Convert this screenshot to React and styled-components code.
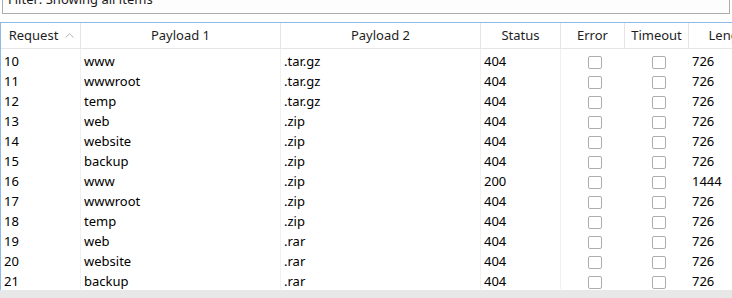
import React from "react";
import styled, { createGlobalStyle } from "styled-components";

const Global = createGlobalStyle`
  html, body { margin: 0; padding: 0; background: #ffffff; overflow: hidden; }
  body { font-family: "Noto Sans", "Segoe UI", sans-serif; font-size: 13px; color: #000; }
`;

const Page = styled.div`
  width: 732px;
  height: 298px;
  overflow: hidden;
  display: flex;
  flex-direction: column;
  background: #fff;
`;

const FilterBox = styled.div`
  box-sizing: border-box;
  margin: -17px 2px 0 2px;
  height: 31px;
  border: 1px solid #adadad;
  background: #fdfdfd;
  padding: 6px 5px 0 5px;
  line-height: 18px;
  color: #1a1a1a;
  white-space: nowrap;
  flex: none;
`;

const Table = styled.div`
  margin-top: 8px;
  border-top: 1px solid #8fb9e6;
  border-left: 1px solid #8fb9e6;
  flex: 1;
  overflow: hidden;
  display: flex;
  flex-direction: column;
`;

const COLS = "80px 200px 200px 80px 64px 64px 82px";

const HeaderRow = styled.div`
  display: grid;
  grid-template-columns: ${COLS};
  height: 26px;
  box-sizing: border-box;
  border-bottom: 1px solid #e5e5e5;
  flex: none;
`;

const HeadCell = styled.div`
  box-sizing: border-box;
  border-right: ${(p) => (p.$last ? "none" : "1px solid #e5e5e5")};
  display: flex;
  align-items: center;
  justify-content: center;
  gap: 7px;
  line-height: 25px;
  color: #1e1e1e;
  white-space: nowrap;
  padding-left: ${(p) => (p.$first ? "2px" : "0")};
`;

const SortArrow = styled.svg`
  width: 9px;
  height: 5px;
  margin-top: -1px;
`;

const Row = styled.div`
  display: grid;
  grid-template-columns: ${COLS};
  height: 20px;
`;

const Cell = styled.div`
  box-sizing: border-box;
  height: 20px;
  padding: 2px 0 0 3px;
  line-height: 20px;
  white-space: nowrap;
  border-right: ${(p) => (p.$divider ? "1px solid #f0f0f0" : "none")};
`;

const CheckCell = styled.div`
  box-sizing: border-box;
  height: 20px;
  display: flex;
  justify-content: center;
  align-items: flex-start;
  padding: 7px 0 0 ${(p) => p.$offset}px;
`;

const Box = styled.div`
  box-sizing: border-box;
  width: 14px;
  height: 13px;
  border: 1px solid #adadad;
  border-radius: 2px;
  background: #fff;
`;

const Scrollbar = styled.div`
  height: 8px;
  background: #e8e8e8;
  flex: none;
`;

const rows = [
  [10, "www", ".tar.gz", 404, 726],
  [11, "wwwroot", ".tar.gz", 404, 726],
  [12, "temp", ".tar.gz", 404, 726],
  [13, "web", ".zip", 404, 726],
  [14, "website", ".zip", 404, 726],
  [15, "backup", ".zip", 404, 726],
  [16, "www", ".zip", 200, 1444],
  [17, "wwwroot", ".zip", 404, 726],
  [18, "temp", ".zip", 404, 726],
  [19, "web", ".rar", 404, 726],
  [20, "website", ".rar", 404, 726],
  [21, "backup", ".rar", 404, 726],
];

export default function App() {
  return (
    <Page>
      <Global />
      <FilterBox>Filter: Showing all items</FilterBox>
      <Table>
        <HeaderRow>
          <HeadCell $first>
            Request
            <SortArrow viewBox="0 0 9 5">
              <path d="M0.5 4.5 L4.5 0.8 L8.5 4.5" fill="none" stroke="#b5b5b5" strokeWidth="1" />
            </SortArrow>
          </HeadCell>
          <HeadCell>Payload 1</HeadCell>
          <HeadCell>Payload 2</HeadCell>
          <HeadCell>Status</HeadCell>
          <HeadCell>Error</HeadCell>
          <HeadCell>Timeout</HeadCell>
          <HeadCell $last>Length</HeadCell>
        </HeaderRow>
        {rows.map(([req, p1, p2, status, len]) => (
          <Row key={req}>
            <Cell $divider>{req}</Cell>
            <Cell $divider>{p1}</Cell>
            <Cell $divider>{p2}</Cell>
            <Cell $divider>{status}</Cell>
            <CheckCell $offset={4}><Box /></CheckCell>
            <CheckCell $offset={4}><Box /></CheckCell>
            <Cell>{len}</Cell>
          </Row>
        ))}
      </Table>
      <Scrollbar />
    </Page>
  );
}
